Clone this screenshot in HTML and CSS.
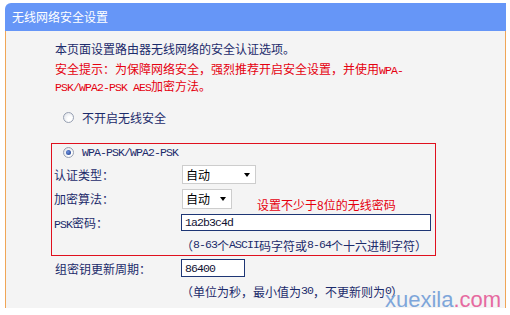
FILE: index.html
```html
<!DOCTYPE html>
<html lang="zh-CN">
<head>
<meta charset="utf-8">
<title>无线网络安全设置</title>
<link rel="stylesheet" href="styles.css">
</head>
<body>
<div class="panel">
  <div class="title">无线网络安全设置</div>
  <div class="content">
    <p class="intro">本页面设置路由器无线网络的安全认证选项。</p>
    <p class="warn">安全提示：为保障网络安全，强烈推荐开启安全设置，并使用<span class="en">WPA-</span><br><span class="en">PSK/WPA2-PSK AES</span>加密方法。</p>
    <div class="radio-row off"><span class="radio"></span><span>不开启无线安全</span></div>
    <div class="wpa-box">
      <div class="radio-row wpa"><span class="radio checked"></span><span class="en">WPA-PSK/WPA2-PSK</span></div>
      <div class="field r-auth"><span class="label">认证类型：</span><div class="select s-wide">自动<span class="arrow"></span></div></div>
      <div class="field r-enc"><span class="label">加密算法：</span><div class="select s-narrow">自动<span class="arrow"></span></div></div>
      <div class="field r-psk"><span class="label"><span class="en">PSK</span>密码：</span><input class="text psk" type="text" value="1a2b3c4d"></div>
      <div class="note r-note">（<span class="en">8-63</span>个<span class="en">ASCII</span>码字符或<span class="en">8-64</span>个十六进制字符）</div>
      <span class="hint">设置不少于8位的无线密码</span>
    </div>
    <div class="field r-group"><span class="label label-out">组密钥更新周期：</span><input class="text period" type="text" value="86400"></div>
    <div class="note r-note2">（单位为秒，最小值为<span class="en">30</span>，不更新则为<span class="en">0</span>）</div>
  </div>
  <div class="watermark">xuexila<span class="dotcom">.com</span></div>
</div>
</body>
</html>
```

FILE: styles.css
```css
body {
  margin: 0;
  background: #ffffff;
  font-family: "Noto Sans CJK SC", "Noto Sans", sans-serif;
  font-size: 12px;
  color: #1c2b6b;
}

.en {
  font-family: "Liberation Mono", monospace;
  font-size: 11.5px;
  letter-spacing: -0.9px;
  line-height: 10px;
}

.panel {
  position: relative;
  margin: 3px 0 0 5px;
  width: 501px;
}

.title {
  height: 28px;
  line-height: 28px;
  background: #6696f7;
  color: #ffffff;
  padding-left: 7px;
  border-top-left-radius: 6px;
}

.content {
  background: #f4f4f4;
  border-left: 1px solid #f0a657;
  border-right: 1px solid #f0a657;
  height: 277px;
  padding: 9px 0 0 49px;
  box-sizing: border-box;
}

.intro {
  margin: 0;
  line-height: 18px;
  height: 18px;
}

.warn {
  margin: 2px 0 0;
  line-height: 17px;
  height: 34px;
  color: #e5000f;
}

.radio-row {
  display: flex;
  align-items: center;
}

.radio-row.off {
  margin-top: 13px;
  height: 20px;
  padding-left: 8px;
}

.radio-row.wpa {
  height: 17px;
  padding-left: 9px;
}

.radio {
  position: relative;
  width: 11px;
  height: 11px;
  border-radius: 50%;
  border: 1px solid #97a0b2;
  background: radial-gradient(circle at 65% 65%, #ffffff 25%, #d9dde5 100%);
  box-sizing: border-box;
  margin-right: 8px;
  flex: none;
}

.radio.checked::after {
  content: "";
  position: absolute;
  left: 2px;
  top: 2px;
  width: 5px;
  height: 5px;
  border-radius: 50%;
  background: radial-gradient(circle at 40% 40%, #6f93e0 0%, #1d3c8a 90%);
}

.wpa-box {
  position: relative;
  margin: 16px 0 0 -4px;
  width: 385px;
  border: 1px solid #e0101e;
  padding-left: 2px;
  box-sizing: border-box;
}

.field {
  display: flex;
  align-items: center;
}

.label {
  width: 128px;
  flex: none;
}

.label-out {
  width: 126px;
}

.r-auth { height: 27px; }
.r-enc { height: 21px; }
.r-psk { height: 26px; }

.note {
  display: flex;
  align-items: center;
}

.r-note {
  height: 20px;
  padding-left: 127px;
}

.select {
  display: flex;
  align-items: center;
  height: 19px;
  background: #ffffff;
  border: 1px solid #cdcdcd;
  box-sizing: border-box;
  padding-left: 3px;
  color: #000000;
}

.s-wide { width: 74px; }
.s-narrow { width: 50px; height: 20px; }

.arrow {
  margin-left: auto;
  margin-right: 5px;
  width: 0;
  height: 0;
  border-top: 4px solid #000000;
  border-left: 3.5px solid transparent;
  border-right: 3.5px solid transparent;
}

.text {
  margin: 0;
  background: #ffffff;
  border: 1px solid #1e3675;
  box-sizing: border-box;
  padding: 0 3px;
  font-family: "Liberation Mono", monospace;
  font-size: 11.5px;
  letter-spacing: -0.9px;
  color: #111133;
  outline: none;
}

.psk {
  width: 250px;
  height: 17px;
  margin-left: -1px;
}

.period {
  width: 64px;
  height: 18px;
}

.hint {
  position: absolute;
  left: 205px;
  top: 53px;
  line-height: 16px;
  color: #e5000f;
}

.r-group {
  height: 20px;
  margin-top: 2px;
}

.r-note2 {
  margin-top: 3px;
  height: 20px;
  padding-left: 126px;
}

.watermark {
  position: absolute;
  left: 380px;
  top: 286px;
  font-family: "Liberation Sans", Arial, sans-serif;
  font-size: 22px;
  line-height: 22px;
  color: #7ea6da;
}

.dotcom {
  color: #e66aa0;
}
```
